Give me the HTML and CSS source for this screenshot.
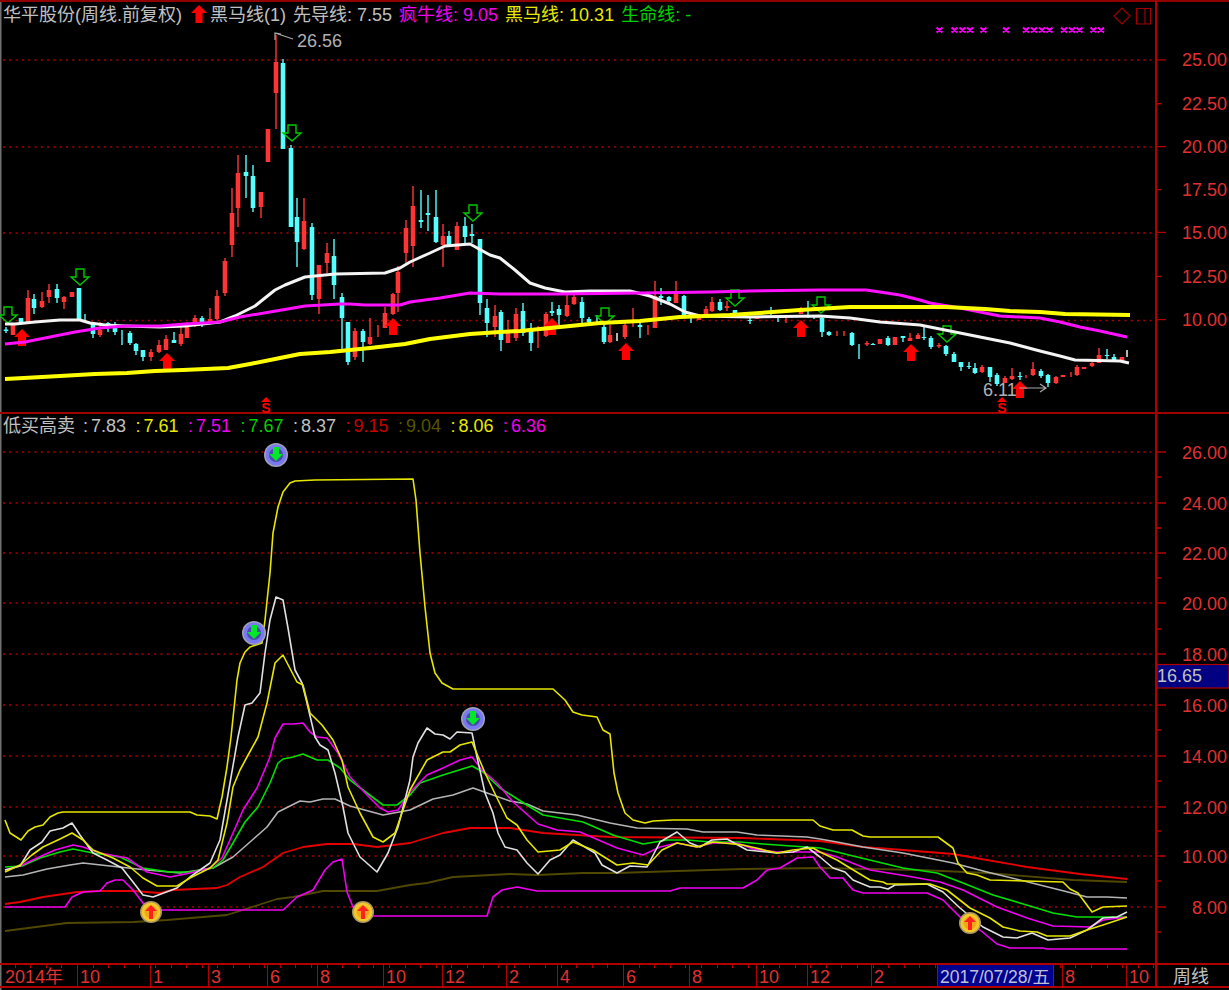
FILE: index.html
```html
<!DOCTYPE html>
<html lang="zh-CN">
<head>
<meta charset="utf-8">
<title>华平股份 周线</title>
<link rel="stylesheet" href="styles.css">
</head>
<body>
<main class="terminal">
  <section class="pane pane-price">
    <div class="chart">
      <div class="legend legend-price">
        <span class="title">华平股份(周线.前复权)</span>
        <svg class="head-arrow" viewBox="0 0 16 18" width="16" height="18"><path d="M8 0L16 8H11.5V18H4.5V8H0Z"/></svg>
        <span class="grey">黑马线(1)</span>
        <span class="grey">先导线: 7.55</span>
        <span class="magenta">疯牛线: 9.05</span>
        <span class="yellow">黑马线: 10.31</span>
        <span class="green">生命线: -</span>
      </div>
      <svg class="plot plot-price" viewBox="0 0 1155 413" width="1155" height="413">
        <defs>
          <path id="hollow-down" d="M-4 0H4V8H9L0 16L-9 8H-4Z"/>
          <path id="solid-up" d="M0 0L8 8H4V17H-4V8H-8Z"/>
          <path id="sell-mark" d="M0 0L5 5H-5Z"/>
        </defs>
        <path class="grid" d="M3 60H1155M3 147H1155M3 233H1155M3 320.5H1155"/>
        <path class="wick red" d="M28 290V322M42 292V308M49 284V303M64 296V309M100 322V337M151 349V361M159 340V353M166 335V350M181 327V346M187 322V338M195 315V327M210 308V323M217 290V320M225 258V296M232 188V257M238 155V227M261 207V218M276 35V129M304 198V250M319 265V314M327 243V273M355 328V360M370 318V345M378 325V337M385 307V328M393 293V315M398 266V312M406 220V263M413 186V267M443 224V267M457 222V250M495 305V337M508 320V343M516 308V341M538 326V348M546 312V337M567 295V317M574 290V305M610 325V343M625 323V339M633 308V327M648 325V335M655 281V328M676 281V303M706 306V318M712 297V312M727 301V311M786 317V323M801 307V314M837 331V336M844 331V336M867 341V346M910 333V341M918 333V339M939 343V348M982 365V373M1005 376V383M1012 368V380M1026 375V378M1033 362V376M1056 376V384M1071 372V377M1077 365V376M1092 362V367M1099 348V363M1122 357V362"/>
        <path class="body red" d="M13 323V335M28 298V322M42 301V307M49 290V297M64 297V302M72 292V297M100 330V335M151 352V357M159 345V352M166 339V350M181 334V344M187 327V338M195 318V323M210 319V322M217 296V319M225 261V293M232 213V245M238 173V208M261 192V207M268 129V162M276 62V93M304 221V249M319 265V299M327 253V263M355 331V357M370 337V344M385 313V328M393 294V314M398 272V293M406 228V253M413 206V246M443 236V245M457 226V250M495 316V327M508 333V343M516 314V338M546 314V336M567 305V316M574 297V304M610 335V342M625 325V337M655 296V328M676 294V303M699 316V320M706 309V315M712 302V311M727 306V308M757 316V319M801 308V314M867 343V344.5M880 339V344M895 337V345M910 338V341M918 335V339M939 345V346.5M982 367V372M1005 378V383M1012 376V379M1033 369V375M1056 377V383M1063 375V377M1077 367V375M1084 367V369M1092 363V366M1099 355V363M1122 357V361"/>
        <path class="wick cyan" d="M6 327V333M34 294V314M57 284V303M85 314V322M93 322V338M108 322V332M115 322V335M122 330V345M130 331V345M136 343V355M143 350V361M174 332V343M202 316V327M246 155V198M253 165V212M283 59V149M291 145V227M297 198V267M312 223V300M334 239V299M342 293V350M348 322V365M363 329V362M421 190V228M428 195V231M436 190V243M449 231V245M465 217V243M472 224V243M480 239V315M487 299V337M501 310V351M523 303V336M531 323V351M552 302V316M559 305V325M582 297V323M589 317V323M597 315V323M604 323V344M640 323V338M661 288V305M669 296V303M684 295V315M691 318V323M720 299V311M735 310V313M750 317V324M771 307V315M778 316V322M808 301V318M814 315V319M822 317V337M829 331V336M852 332V346M859 344V359M873 343V345M888 336V346M903 336V342M924 327V340M931 336V349M946 345V356M954 352V362M961 362V371M969 362V369M975 363V374M990 367V382M997 373V386M1020 372V380M1041 369V378M1048 374V387M1107 349V359M1114 354V362"/>
        <path class="body cyan" d="M6 329.5V331M21 318V324M34 299V308M57 289V298M79 288V320M93 324V334M108 323V328M115 327V332M130 333V343M136 344V351M143 350V357M174 340V343M202 318V322M246 172V176M253 176V208M283 63V149M291 148V227M297 217V242M312 227V295M334 256V285M342 297V318M348 322V362M363 331V342M421 220V222M428 213V215M436 217V242M449 236V245M465 226V237M472 234V236M480 239V303M487 308V323M501 312V340M523 311V333M531 330V343M552 311V313M559 309V315M582 302V318M589 319V322M604 327V342M640 325V327M661 296V298M669 297V301M684 296V315M720 302V310M735 310V313M750 320V321M822 318V332M829 332V335M852 333V345M873 344V345M888 338V345M903 336V338M924 337V338M931 338V347M946 346V354M954 354V362M961 362V367M969 366V367M975 368V373M990 367V377M997 375V384M1020 376V377M1041 371V376M1048 375V383M1107 355V356M1114 357V361"/>
        <path class="wick white" d="M617 333V341M1127 350V357"/>
        <g class="sig-down">
          <use href="#hollow-down" x="8" y="307"/>
          <use href="#hollow-down" x="80" y="269"/>
          <use href="#hollow-down" x="292" y="125"/>
          <use href="#hollow-down" x="473" y="205"/>
          <use href="#hollow-down" x="605" y="308"/>
          <use href="#hollow-down" x="735" y="290"/>
          <use href="#hollow-down" x="821" y="297"/>
          <use href="#hollow-down" x="947" y="326"/>
        </g>
        <g class="sig-up">
          <use href="#solid-up" x="22" y="329"/>
          <use href="#solid-up" x="167" y="353"/>
          <use href="#solid-up" x="393" y="318"/>
          <use href="#solid-up" x="552" y="318"/>
          <use href="#solid-up" x="626" y="343"/>
          <use href="#solid-up" x="801" y="320"/>
          <use href="#solid-up" x="911" y="344"/>
          <use href="#solid-up" x="1020" y="381"/>
        </g>
        <polyline class="ma ma-white" points="5,324 15,324 35,322 60,320 80,320 90,323 105,325 125,326 160,327 185,326 220,322 235,316 255,306 275,290 285,285 305,277 335,274 385,273 400,268 410,262 430,253 445,246 470,244 490,255 500,258 515,270 530,283 545,288 565,292 590,291 630,291 650,296 670,304 685,312 700,316 750,317 820,316 850,318 880,322 920,325 950,331 980,337 1010,343 1040,351 1060,356 1075,360 1120,361 1129,363"/>
        <polyline class="ma ma-magenta" points="5,344 25,342 50,337 75,332 100,328 125,326 160,326 185,324 220,322 240,317 270,312 305,306 340,304 350,304 365,305 400,305 410,302 440,298 470,293 500,294 560,294 640,293 710,292 750,291 820,290 866,290 880,292 900,295 920,300 930,303 960,308 980,312 1000,316 1040,318 1060,322 1080,327 1100,331 1127,337"/>
        <polyline class="ma ma-yellow" points="5,379 24,378 60,376 95,374 127,373 155,371 183,370 228,368 250,364 280,358 300,354 330,352 370,348 405,344 430,339 470,334 500,332 520,331 560,327 600,323 640,321 680,317 730,315 760,313 800,310 850,307 946,307 985,309 1010,311 1040,312 1065,314 1130,315"/>
        <g class="note">
          <path d="M275 40V33L281 34M275 33L284 36L293 39M1019 388H1045M1040 384L1046 388L1040 392"/>
          <text x="297" y="47">26.56</text>
          <text x="983" y="396">6.11</text>
        </g>
        <g class="sell">
          <use href="#sell-mark" x="266" y="397"/>
          <use href="#sell-mark" x="1002" y="397"/>
          <text x="266" y="412.5">S</text>
          <text x="1002" y="412.5">S</text>
        </g>
        <path class="cross" d="M936.5 27.5l6 5m0-5l-6 5M951.5 27.5l6 5m0-5l-6 5M959.5 27.5l6 5m0-5l-6 5M967 27.5l6 5m0-5l-6 5M980.5 27.5l6 5m0-5l-6 5M1003 27.5l6 5m0-5l-6 5M1023 27.5l6 5m0-5l-6 5M1031 27.5l6 5m0-5l-6 5M1039 27.5l6 5m0-5l-6 5M1046.5 27.5l6 5m0-5l-6 5M1061 27.5l6 5m0-5l-6 5M1069 27.5l6 5m0-5l-6 5M1076.5 27.5l6 5m0-5l-6 5M1090.5 27.5l6 5m0-5l-6 5M1098 27.5l6 5m0-5l-6 5"/>
        <path class="frame-icon" d="M1122 8L1130 16L1122 24L1114 16ZM1136.5 8.5H1150.5V24H1136.5ZM1145 8.5V24"/>
      </svg>
    </div>
    <svg class="axis" viewBox="1157 0 72 413" width="72" height="412">
      <path class="tick" d="M1157 60H1166M1157 104H1161M1157 147H1166M1157 190H1161M1157 233H1166M1157 277H1161M1157 320.5H1166"/>
      <g class="axis-labels">
        <text x="1227" y="66.5">25.00</text>
        <text x="1227" y="110.5">22.50</text>
        <text x="1227" y="153">20.00</text>
        <text x="1227" y="196.5">17.50</text>
        <text x="1227" y="239.5">15.00</text>
        <text x="1227" y="283.5">12.50</text>
        <text x="1227" y="327">10.00</text>
      </g>
    </svg>
  </section>

  <section class="pane pane-ind">
    <div class="chart">
      <div class="legend legend-ind">
        <span class="title ind-title">低买高卖</span>
        <span class="val grey"><i>:</i>7.83</span>
        <span class="val yellow"><i>:</i>7.61</span>
        <span class="val magenta"><i>:</i>7.51</span>
        <span class="val green"><i>:</i>7.67</span>
        <span class="val grey"><i>:</i>8.37</span>
        <span class="val dim-red"><i>:</i>9.15</span>
        <span class="val olive"><i>:</i>9.04</span>
        <span class="val yellow"><i>:</i>8.06</span>
        <span class="val magenta"><i>:</i>6.36</span>
      </div>
      <svg class="plot" viewBox="0 414 1155 549" width="1155" height="549">
        <defs>
          <g id="badge-sell">
            <circle r="12" fill="#a0a0b8"/>
            <circle r="10.5" fill="#7878f0"/>
            <circle r="7" fill="#4a4aa8"/>
            <path d="M-3 -8H3V-1H7L0 6L-7 -1H-3Z" fill="#00e828"/>
          </g>
          <g id="badge-buy">
            <circle r="11" fill="#a89868"/>
            <circle r="9.5" fill="#f4c828"/>
            <circle r="6.5" fill="#f0a818"/>
            <path d="M0 -7L6 -1H2V7H-2V-1H-6Z" fill="#ff2020"/>
          </g>
        </defs>
        <path class="grid" d="M3 452H1155M3 503H1155M3 553H1155M3 603H1155M3 654H1155M3 705H1155M3 756H1155M3 807H1155M3 856H1155M3 907H1155"/>
        <polyline class="line olive-line" points="5,931 67,923 133,922 167,920 227,915 277,899 293,897 323,891 377,891 410,885 427,883 453,877 510,874 537,875 583,873 617,873 677,871 743,869 820,868 920,870 987,873 1073,880 1127,882"/>
        <polyline class="line red-line" points="5,904 20,902 43,897 77,892 100,891 133,891 160,893 173,890 217,888 227,885 240,877 263,867 283,853 303,847 327,844 353,844 377,847 410,843 443,833 470,828 510,828 543,833 610,837 743,838 820,841 863,847 903,850 953,854 987,860 1027,867 1080,874 1127,879"/>
        <polyline class="line grey-line" points="5,877 23,875 47,869 70,865 83,863 110,866 147,870 180,873 213,868 233,857 250,842 267,827 278,812 300,801 310,802 323,799 335,799 350,806 383,815 410,810 433,799 453,795 473,788 490,794 510,801 527,804 543,811 577,815 610,823 637,828 687,829 703,832 737,832 757,835 807,837 820,839 837,842 863,847 903,853 953,863 987,872 1020,880 1060,890 1087,897 1107,897 1127,898"/>
        <polyline class="line yellow-line" points="5,820 10,833 21,840 28,831 35,827 43,825 50,817 58,813 63,812 190,812 197,815 210,816 217,819 222,797 227,767 231,737 237,680 240,663 245,652 250,647 262,643 265,620 270,573 273,533 278,507 283,492 290,483 295,481 315,480 413,479 416,500 420,553 425,607 430,653 435,673 442,683 453,689 553,689 565,700 573,712 582,715 597,717 603,730 610,734 614,773 618,793 625,813 633,820 645,823 653,821 673,820 813,820 820,826 833,830 852,830 863,836 870,837 938,837 953,848 958,863 967,873 977,875 990,880 1063,882 1070,889 1078,893 1092,912 1103,907 1127,906"/>
        <polyline class="line green-line" points="5,867 22,866 40,858 60,852 73,849 93,853 120,857 143,868 170,872 190,872 213,868 223,860 233,843 245,822 258,807 270,783 278,763 283,759 293,757 303,754 317,760 328,760 340,768 350,780 367,793 383,805 397,805 410,795 420,783 443,775 472,766 483,772 500,788 530,807 543,815 583,822 613,835 643,844 667,840 687,840 710,842 740,842 763,844 820,848 837,852 853,856 903,868 937,873 963,883 993,895 1020,903 1053,913 1077,917 1127,917"/>
        <polyline class="line magenta-line" points="5,870 20,866 37,858 55,850 73,845 83,847 100,853 127,858 147,872 170,877 190,873 210,868 222,858 233,833 243,810 257,788 270,757 275,738 283,724 293,724 303,723 310,732 317,737 327,738 338,753 350,777 367,795 380,808 388,812 398,810 410,792 427,775 443,768 460,760 472,757 482,770 497,783 513,802 538,824 557,830 580,832 617,848 643,855 660,847 677,843 697,847 713,843 737,843 753,849 777,852 807,852 820,852 837,857 870,870 907,876 940,882 963,890 997,907 1027,918 1053,926 1090,927 1103,920 1127,917"/>
        <polyline class="line white-line" points="5,870 20,866 30,850 42,842 50,831 63,828 72,823 80,835 93,853 107,860 122,868 133,882 143,895 153,897 177,888 190,877 210,863 220,840 230,783 238,737 245,705 252,703 260,693 265,653 270,620 276,597 283,600 288,628 295,670 302,683 307,703 315,737 320,745 328,750 335,773 343,807 348,833 360,857 377,872 388,853 398,827 410,780 413,757 418,743 427,728 435,734 443,735 450,739 457,732 472,733 477,757 485,793 493,813 498,833 505,847 517,850 527,863 538,874 550,860 560,855 573,840 595,853 602,865 617,873 630,866 647,867 660,842 677,832 690,843 700,847 712,840 727,839 747,850 777,853 793,852 807,847 820,857 833,868 845,872 853,880 870,887 880,887 888,889 895,885 927,884 943,892 960,908 983,927 1003,937 1017,938 1032,933 1048,940 1070,938 1087,930 1103,918 1117,917 1127,912"/>
        <polyline class="line yellow-line" points="5,872 20,865 32,855 43,847 60,839 72,833 83,840 93,850 113,858 130,867 143,878 157,886 177,886 190,878 210,868 218,860 227,823 233,787 240,770 247,757 258,737 267,703 275,663 283,655 297,682 303,685 310,713 322,725 333,740 342,760 348,787 360,813 373,837 383,842 395,833 410,790 427,760 443,752 450,752 460,745 472,742 485,773 498,800 507,818 517,825 527,840 538,852 560,850 573,842 593,850 617,865 633,863 648,865 662,850 677,843 697,847 713,842 743,845 777,853 793,850 813,848 820,852 837,860 850,868 870,880 883,882 887,884 930,884 947,890 970,908 990,918 1003,927 1020,931 1037,932 1047,936 1070,936 1087,930 1103,925 1127,917"/>
        <polyline class="line magenta-line" points="5,907 65,907 72,897 83,892 100,891 107,883 115,880 123,880 133,890 143,903 162,910 283,910 297,897 313,890 325,870 333,862 342,859 347,892 353,907 372,916 487,916 493,897 502,890 517,887 537,891 670,891 680,888 743,888 757,880 767,870 780,868 797,858 813,857 820,867 830,878 843,878 853,890 863,893 927,893 943,900 960,917 980,930 997,944 1010,948 1043,948 1047,949 1127,949"/>
        <use href="#badge-sell" x="276" y="455"/>
        <use href="#badge-sell" x="254" y="633"/>
        <use href="#badge-sell" x="473" y="719"/>
        <use href="#badge-buy" x="151" y="912"/>
        <use href="#badge-buy" x="363" y="912"/>
        <use href="#badge-buy" x="970" y="923"/>
      </svg>
    </div>
    <svg class="axis" viewBox="1157 414 72 549" width="72" height="549">
      <path class="tick" d="M1157 452H1166M1157 477H1161M1157 503H1166M1157 528H1161M1157 553H1166M1157 578H1161M1157 603H1166M1157 629H1161M1157 654H1166M1157 705H1166M1157 730H1161M1157 756H1166M1157 781H1161M1157 807H1166M1157 831H1161M1157 856H1166M1157 881H1161M1157 907H1166M1157 932H1161"/>
      <g class="axis-labels">
        <text x="1227" y="458.5">26.00</text>
        <text x="1227" y="509.5">24.00</text>
        <text x="1227" y="559.5">22.00</text>
        <text x="1227" y="609.5">20.00</text>
        <text x="1227" y="660.5">18.00</text>
        <text x="1227" y="711.5">16.00</text>
        <text x="1227" y="762.5">14.00</text>
        <text x="1227" y="813.5">12.00</text>
        <text x="1227" y="862.5">10.00</text>
        <text x="1227" y="913.5">8.00</text>
      </g>
      <rect class="tag-box" x="1157" y="664.5" width="72" height="23.5"/>
      <text class="tag-text" x="1157" y="682">16.65</text>
    </svg>
  </section>

  <footer class="timebar">
    <span class="cell">2014年</span>
    <span class="cell">10</span>
    <span class="cell">1</span>
    <span class="cell">3</span>
    <span class="cell">6</span>
    <span class="cell">8</span>
    <span class="cell">10</span>
    <span class="cell">12</span>
    <span class="cell">2</span>
    <span class="cell">4</span>
    <span class="cell">6</span>
    <span class="cell">8</span>
    <span class="cell">10</span>
    <span class="cell">12</span>
    <span class="cell">2</span>
    <span class="cell cell-date">2017/07/28/五</span>
    <span class="cell cell-gap"></span>
    <span class="cell">8</span>
    <span class="cell">10</span>
    <span class="cell cell-period">周线</span>
  </footer>
</main>
</body>
</html>
```

FILE: styles.css
```css
html, body {
  margin: 0;
  height: 990px;
  overflow: hidden;
  background: #000;
}

.terminal {
  width: 1229px;
  height: 990px;
  display: grid;
  grid-template-rows: 414px 549px 25px;
  background: #000;
  box-shadow: inset 1.5px 0 #707070;
  font-family: "Liberation Sans", "Noto Sans CJK SC", sans-serif;
  font-size: 18px;
  color: #c0c0c0;
}

.pane {
  display: grid;
  grid-template-columns: 1155px 74px;
  border-bottom: 2px solid #a00000;
  box-sizing: border-box;
}
.pane-price { border-top: 0; box-shadow: inset 0 2px #900000; }
.pane-ind { border-bottom: 0; }

.chart { position: relative; }
.plot, .axis { display: block; overflow: hidden; }
.plot-price { overflow: visible; }
.axis { border-left: 2px solid #b00000; }

.legend {
  position: absolute;
  left: 3px;
  display: flex;
  align-items: center;
  white-space: nowrap;
  line-height: 22px;
}
.legend-price { top: 4px; gap: 7px; }
.legend-ind { top: 1px; gap: 0; }
.head-arrow { fill: #ff0000; margin: -2px -4px 0 2px; }
.title { color: #c0c0c0; }
.ind-title { margin-right: 6px; }
.val { width: 52.5px; display: flex; }
.val i { font-style: normal; width: 10px; padding-left: 2px; box-sizing: border-box; }

.grey { color: #c0c0c0; }
.yellow { color: #e8e800; }
.magenta { color: #f000f0; }
.green { color: #00d000; }
.dim-red { color: #c80000; }
.olive { color: #565600; }

.grid {
  fill: none;
  stroke: #b00000;
  stroke-width: 1.5;
  stroke-dasharray: 2 4.3;
}

.wick { fill: none; stroke-width: 1.4; }
.body { fill: none; stroke-width: 4.6; }
.wick.red, .body.red { stroke: #ff3535; }
.wick.cyan, .body.cyan { stroke: #55ffff; }
.wick.white { stroke: #f0f0f0; stroke-width: 1.5; }

.sig-down { fill: #000; fill-opacity: 0; stroke: #00c800; stroke-width: 1.4; }
.sig-up { fill: #ff0000; }

.ma { fill: none; stroke-linejoin: round; }
.ma-white { stroke: #f4f4f4; stroke-width: 3; }
.ma-magenta { stroke: #ff10ff; stroke-width: 3; }
.ma-yellow { stroke: #ffff00; stroke-width: 4; }

.note path { fill: none; stroke: #a8a8a8; stroke-width: 1.2; }
.note text { fill: #b0b0b0; font-size: 18px; }

.sell use { fill: #ff0000; }
.sell text { fill: #ff0000; font-size: 14px; font-weight: 700; text-anchor: middle; }

.cross { fill: none; stroke: #ff00ff; stroke-width: 2; }
.frame-icon { fill: none; stroke: #a00000; stroke-width: 1.2; }

.tick { fill: none; stroke: #b00000; stroke-width: 1.3; }
.axis-labels text { fill: #e03030; font-size: 18px; text-anchor: end; }
.tag-box { fill: #000080; stroke: #b00000; stroke-width: 1.2; }
.tag-text { fill: #c0c0c0; font-size: 18px; }

.line { fill: none; stroke-width: 1.6; stroke-linejoin: round; }
.yellow-line { stroke: #e6e600; }
.white-line { stroke: #e0e0e0; }
.grey-line { stroke: #b4b4b4; }
.green-line { stroke: #00e000; }
.magenta-line { stroke: #f000f0; }
.red-line { stroke: #e40000; stroke-width: 1.8; }
.olive-line { stroke: #504800; stroke-width: 1.8; }

.timebar {
  display: grid;
  grid-template-columns: 77px 73px 58px 59px 50px 66px 59px 64px 51px 66px 66px 67px 51px 64px 66px 116px 9px 64px 29px 74px;
  border-top: 2px solid #b00000;
  border-bottom: 2px solid #b00000;
  box-sizing: border-box;
  background-image: repeating-linear-gradient(90deg, transparent 0 14.6px, #b00000 14.6px 15.6px);
  background-size: 100% 3px;
  background-repeat: no-repeat;
  color: #e03030;
  line-height: 25px;
}
.cell {
  padding-left: 2px;
  border-left: 1.5px solid #b00000;
  overflow: hidden;
  white-space: nowrap;
  box-sizing: border-box;
}
.cell:first-child { border-left: 0; padding-left: 5px; }
.cell-date {
  background: #000090;
  color: #c0c0d8;
  padding-left: 2px;
  border-left-color: #b00000;
  font-size: 17.5px;
}
.cell-gap { padding: 0; }
.cell-period {
  color: #c0c0c0;
  padding-left: 16px;
  border-left-width: 2px;
  background: #000;
}
```
